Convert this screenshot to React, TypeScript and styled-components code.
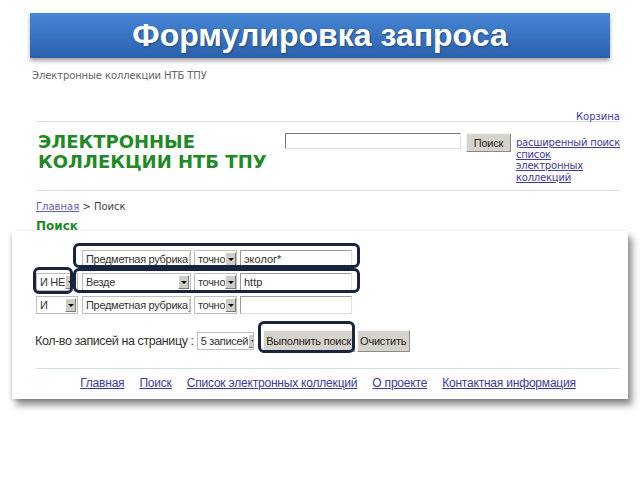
import styled, { createGlobalStyle } from 'styled-components';

const GlobalStyle = createGlobalStyle`
  body {
    margin: 0;
    background: #fff;
    font-family: "Liberation Sans", Arial, sans-serif;
  }
`;

const SANS = `"Liberation Sans", Arial, sans-serif`;
const VERDANA = `"DejaVu Sans", Verdana, sans-serif`;
const GREEN = '#1f8a26';
const LINK = '#3d3d9e';

const Page = styled.div`
  width: 640px;
  height: 480px;
  overflow: hidden;
  padding-top: 13px;
  box-sizing: border-box;
`;

const Banner = styled.div`
  margin: 0 30px;
  height: 45px;
  display: flex;
  align-items: center;
  justify-content: center;
  background: linear-gradient(#4687d6, #2b60ab);
  box-shadow: 0 3px 4px rgba(0, 0, 0, 0.35);
  color: #fff;
  font-size: 32px;
  font-weight: bold;
  text-shadow: 1px 1px 2px rgba(0, 0, 0, 0.3);
`;

const SiteName = styled.div`
  margin: 12px 0 0 32px;
  font: 10px/12px ${VERDANA};
  letter-spacing: -0.1px;
  color: #666;
`;

const Header = styled.div`
  margin: 0 20px 0 36px;
`;

const Cart = styled.div`
  margin-top: 30px;
  text-align: right;
  font: 10px/9px ${VERDANA};
  color: ${LINK};
`;

const HeaderMain = styled.div`
  height: 70px;
  border-top: 1px solid #d3e0e5;
  border-bottom: 1px solid #d3e0e5;
  display: flex;
  justify-content: space-between;
  padding: 10px 0 0 2px;
  box-sizing: border-box;
`;

const Logo = styled.div`
  font: bold 18px/20px ${VERDANA};
  color: ${GREEN};
`;

const SearchGroup = styled.div`
  display: flex;
  align-items: flex-start;
  margin-top: 1px;
`;

const QuickInput = styled.div`
  width: 176px;
  height: 16px;
  box-sizing: border-box;
  border: 1px solid #e2e2e2;
  border-top-color: #7a7a7a;
  border-left-color: #7a7a7a;
  background: #fff;
`;

const Button = styled.div<{ $w: number; $h: number }>`
  width: ${(p) => p.$w}px;
  height: ${(p) => p.$h}px;
  box-sizing: border-box;
  display: flex;
  align-items: center;
  justify-content: center;
  white-space: nowrap;
  background: #d6d3cc;
  border: 1px solid #8a8a8a;
  border-top-color: #f4f4f4;
  border-left-color: #f4f4f4;
  font-family: ${SANS};
  font-size: 11px;
  letter-spacing: -0.2px;
  color: #222;
`;

const HeadLinks = styled.div`
  margin: 4px 0 0 5px;
  display: flex;
  flex-direction: column;
  font: 10px/11.5px ${VERDANA};
  letter-spacing: -0.2px;
  white-space: nowrap;
  a {
    color: ${LINK};
  }
`;

const Breadcrumb = styled.div`
  margin-top: 10px;
  font: 10px/12px ${VERDANA};
  color: #444;
  a {
    color: #6262a8;
  }
`;

const SearchTitle = styled.div`
  margin-top: 6px;
  font: bold 12px/14px ${VERDANA};
  color: ${GREEN};
`;

const Panel = styled.div`
  position: relative;
  margin: -2px 12px 0;
  height: 168px;
  padding: 19px 8px 0 24px;
  box-sizing: border-box;
  background: #fff;
  box-shadow: 4px 6px 7px rgba(0, 0, 0, 0.45), -1px 1px 3px rgba(0, 0, 0, 0.15);
  font-family: ${SANS};
`;

const Row = styled.div`
  display: flex;
  gap: 3px;
  height: 18px;
  margin-bottom: 5px;
`;

const ConjSlot = styled.div`
  width: 42px;
  margin-right: 1px;
`;

const SelectBox = styled.div<{ $w: number }>`
  width: ${(p) => p.$w}px;
  height: 18px;
  box-sizing: border-box;
  border: 1px solid #bdbdbd;
  background: #fff;
  display: flex;
  align-items: center;
  justify-content: space-between;
  padding-left: 3px;
  font-size: 11px;
  letter-spacing: -0.3px;
  color: #333;
  white-space: nowrap;
  overflow: hidden;
`;

const Arrow = styled.div`
  flex: none;
  width: 11px;
  height: 14px;
  margin-right: 1px;
  box-sizing: border-box;
  background: #d0ccc4;
  border: 1px solid #7a7a7a;
  border-top-color: #fff;
  border-left-color: #fff;
  display: flex;
  align-items: center;
  justify-content: center;
  &::after {
    content: '';
    border-left: 3px solid transparent;
    border-right: 3px solid transparent;
    border-top: 3px solid #000;
  }
`;

const TextField = styled.div`
  width: 112px;
  height: 18px;
  box-sizing: border-box;
  border: 1px solid #e0e0e0;
  border-top-color: #9a9a9a;
  border-left-color: #9a9a9a;
  padding-left: 3px;
  display: flex;
  align-items: center;
  font-size: 11px;
  color: #333;
`;

const ActionRow = styled.div`
  display: flex;
  align-items: center;
  margin-top: 16px;
  margin-left: -1px;
  height: 22px;
`;

const PerPage = styled.span`
  font-size: 12.5px;
  letter-spacing: -0.4px;
  white-space: nowrap;
  color: #333;
  margin-right: 3px;
`;

const Footer = styled.div`
  margin-top: 16px;
  border-top: 1px solid #cfdfe2;
  padding-top: 6px;
  display: flex;
  justify-content: center;
  gap: 15px;
  font-size: 12px;
  letter-spacing: -0.2px;
  line-height: 16px;
  white-space: nowrap;
  a {
    color: #3a3a9a;
  }
`;

const Mark = styled.div<{ $x: number; $y: number; $w: number; $h: number }>`
  position: absolute;
  left: ${(p) => p.$x}px;
  top: ${(p) => p.$y}px;
  width: ${(p) => p.$w}px;
  height: ${(p) => p.$h}px;
  box-sizing: border-box;
  border: 3px solid #17243f;
  border-radius: 6px;
`;

function Select({ w, value }: { w: number; value: string }) {
  return (
    <SelectBox $w={w}>
      <span>{value}</span>
      <Arrow />
    </SelectBox>
  );
}

const rows = [
  { conj: '', field: 'Предметная рубрика', text: 'эколог*' },
  { conj: 'И НЕ', field: 'Везде', text: 'http' },
  { conj: 'И', field: 'Предметная рубрика', text: '' },
];

export default function App() {
  return (
    <Page>
      <GlobalStyle />
      <Banner>Формулировка запроса</Banner>
      <SiteName>Электронные коллекции НТБ ТПУ</SiteName>
      <Header>
        <Cart>Корзина</Cart>
        <HeaderMain>
          <Logo>
            ЭЛЕКТРОННЫЕ
            <br />
            КОЛЛЕКЦИИ НТБ ТПУ
          </Logo>
          <SearchGroup>
            <QuickInput />
            <Button $w={45} $h={19} style={{ marginLeft: 5 }}>
              Поиск
            </Button>
            <HeadLinks>
              <a href="#">расширенный поиск</a>
              <a href="#">список</a>
              <a href="#">электронных</a>
              <a href="#">коллекций</a>
            </HeadLinks>
          </SearchGroup>
        </HeaderMain>
        <Breadcrumb>
          <a href="#">Главная</a> &gt; Поиск
        </Breadcrumb>
        <SearchTitle>Поиск</SearchTitle>
      </Header>
      <Panel>
        {rows.map((r, i) => (
          <Row key={i}>
            <ConjSlot>{r.conj && <Select w={42} value={r.conj} />}</ConjSlot>
            <Select w={109} value={r.field} />
            <Select w={43} value="точно" />
            <TextField>{r.text}</TextField>
          </Row>
        ))}
        <ActionRow>
          <PerPage>Кол-во записей на страницу :</PerPage>
          <Select w={57} value="5 записей" />
          <Button $w={92} $h={22} style={{ marginLeft: 9 }}>
            Выполнить поиск
          </Button>
          <Button $w={53} $h={22} style={{ marginLeft: 2 }}>
            Очистить
          </Button>
        </ActionRow>
        <Footer>
          <a href="#">Главная</a>
          <a href="#">Поиск</a>
          <a href="#">Список электронных коллекций</a>
          <a href="#">О проекте</a>
          <a href="#">Контактная информация</a>
        </Footer>
        <Mark $x={61} $y={12} $w={287} $h={25} />
        <Mark $x={61} $y={37} $w={287} $h={25} />
        <Mark $x={21} $y={36} $w={40} $h={27} />
        <Mark $x={246} $y={90} $w={97} $h={32} />
      </Panel>
    </Page>
  );
}
